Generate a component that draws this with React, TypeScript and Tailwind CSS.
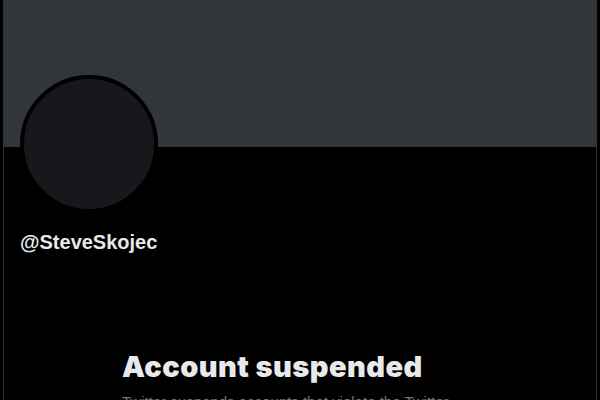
import React from 'react';

const App = () => {
  return (
    <div className="w-[600px] h-[400px] overflow-hidden bg-black flex items-start" style={{ fontFamily: '"Liberation Sans", Arial, sans-serif' }}>
      <div className="w-[3px] shrink-0" />
      <main className="w-[594px] min-h-[400px] shrink-0 border-x border-[#2f3336]">
        <div className="h-[147px] bg-[#333639]" />
        <div className="px-4">
          <div className="-mt-[72px] w-[138px] h-[138px] rounded-full border-4 border-black bg-[#16181c]" />
          <div className="mt-[17px] text-[20px] leading-[24px] font-bold text-[#e7e9ea]">@SteveSkojec</div>
        </div>
        <section className="mt-[95px] w-[356px] mx-auto">
          <h2 className="text-[29px] leading-[36px] font-black tracking-[0.45px] text-[#e7e9ea]" style={{ fontFamily: 'Inter, "Liberation Sans", sans-serif' }}>
            Account suspended
          </h2>
          <p className="mt-[7px] text-[15px] leading-[20px] text-[#71767b]">
            Twitter suspends accounts that violate the Twitter Rules. <span className="text-[#1d9bf0]">Learn more</span>
          </p>
        </section>
      </main>
    </div>
  );
};

export default App;
